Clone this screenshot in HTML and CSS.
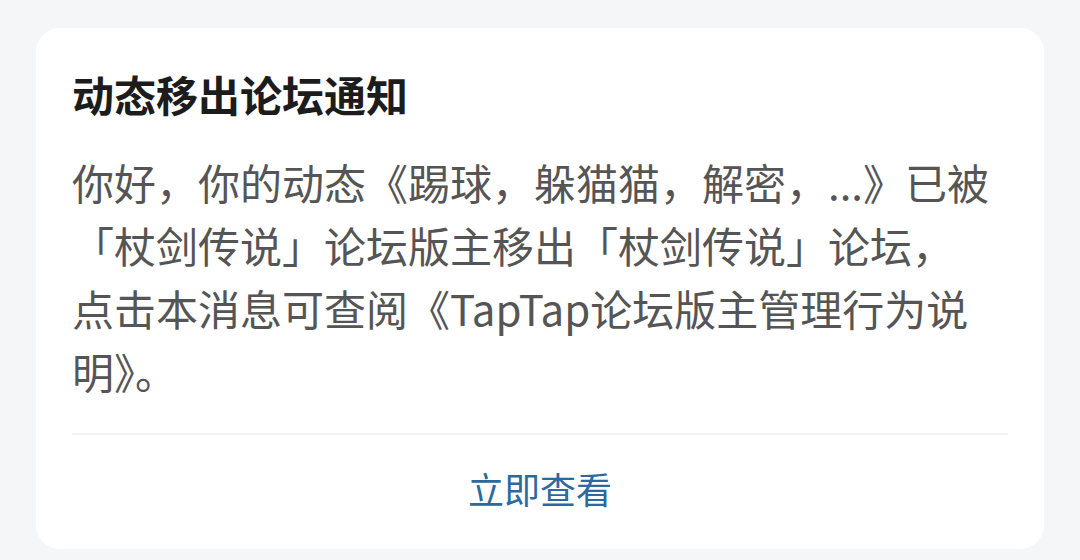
FILE: index.html
```html
<!DOCTYPE html>
<html lang="zh-CN">
<head>
<meta charset="utf-8">
<link rel="stylesheet" href="styles.css">
</head>
<body>
<div class="page">
  <div class="card">
    <div class="content">
      <div class="title">动态移出论坛通知</div>
      <div class="body">你好，你的动态《踢球，躲猫猫，解密，...》已被「杖剑传说」论坛版主移出「杖剑传说」论坛，<br>点击本消息可查阅《TapTap论坛版主管理行为说明》。</div>
    </div>
    <div class="divider"></div>
    <div class="action">立即查看</div>
  </div>
</div>
</body>
</html>
```
FILE: styles.css
```css
html, body {
  margin: 0;
  padding: 0;
}
body {
  background: #f5f6f8;
  font-family: "Noto Sans CJK SC", "Noto Sans", sans-serif;
  width: 1080px;
  height: 560px;
  overflow: hidden;
}
.page {
  padding: 28px 36px 0;
}
.card {
  background: #ffffff;
  border-radius: 24px;
  height: 521px;
  display: flex;
  flex-direction: column;
}
.content {
  padding: 37px 36px 0;
}
.title {
  font-size: 42px;
  font-weight: 700;
  color: #1c1c1c;
  line-height: 58px;
}
.body {
  margin-top: 27px;
  font-size: 42px;
  line-height: 63px;
  color: #555555;
}
.divider {
  margin: 31px 36px 0;
  height: 2px;
  background: #f2f2f2;
}
.action {
  flex: 1;
  display: flex;
  align-items: center;
  justify-content: center;
  padding-bottom: 8px;
  font-size: 36px;
  color: #2b6a9e;
}
```
